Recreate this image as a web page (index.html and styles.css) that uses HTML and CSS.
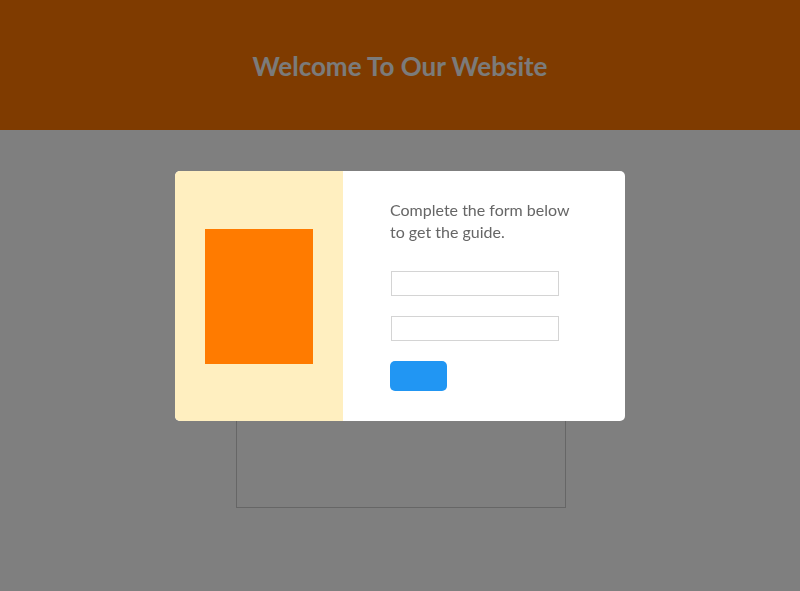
FILE: index.html
```html
<!DOCTYPE html>
<html lang="en">

<head>
    <meta charset="UTF-8">
    <title>Welcome</title>
    <link rel="stylesheet" href="styles.css">
</head>

<body>
    <header class="top">
        <h1>Welcome To Our Website</h1>
    </header>
    <main class="content">
        <div class="box"></div>
    </main>

    <div class="overlay">
        <div class="modal">
            <div class="modal_side">
                <div class="guide"></div>
            </div>
            <form class="modal_form">
                <p>Complete the form below to get the guide.</p>
                <input type="text">
                <input type="email">
                <button type="button"></button>
            </form>
        </div>
    </div>
</body>

</html>
```

FILE: styles.css
```css
body {
    margin: 0;
    font-family: Lato, 'Open Sans', sans-serif;
    background: #fff;
}

.top {
    height: 130px;
    background-color: #ff7600;
    display: flex;
    align-items: center;
    justify-content: center;
}

h1 {
    margin: 0;
    font-size: 26px;
    font-weight: 700;
    color: #f6f6f6;
    padding-top: 2px;
}

.content {
    display: flex;
    justify-content: center;
    padding-top: 60px;
}

.box {
    width: 328px;
    height: 316px;
    margin-left: 2px;
    border: 1px solid #cccccc;
}

.overlay {
    position: fixed;
    inset: 0;
    background: rgba(0, 0, 0, 0.5);
    display: flex;
    justify-content: center;
    padding-top: 171px;
    align-items: flex-start;
}

.modal {
    width: 450px;
    height: 250px;
    display: flex;
    background: #fff;
    border-radius: 5px;
    overflow: hidden;
}

.modal_side {
    width: 168px;
    background-color: #ffefc0;
    display: flex;
    justify-content: center;
    padding-top: 58px;
    box-sizing: border-box;
}

.guide {
    width: 108px;
    height: 135px;
    background-color: #ff7b00;
}

.modal_form {
    display: flex;
    flex-direction: column;
    align-items: flex-start;
    padding: 28px 0 0 47px;
}

.modal_form p {
    margin: 0 0 28px 0;
    width: 192px;
    font-size: 16px;
    line-height: 22px;
    color: #666;
}

.modal_form input {
    width: 168px;
    height: 25px;
    box-sizing: border-box;
    margin: 0 0 20px 1px;
    border: 1px solid #d4d4d4;
    padding: 0;
}

.modal_form button {
    width: 57px;
    height: 30px;
    border: none;
    border-radius: 5px;
    background-color: #2196f3;
}
```
